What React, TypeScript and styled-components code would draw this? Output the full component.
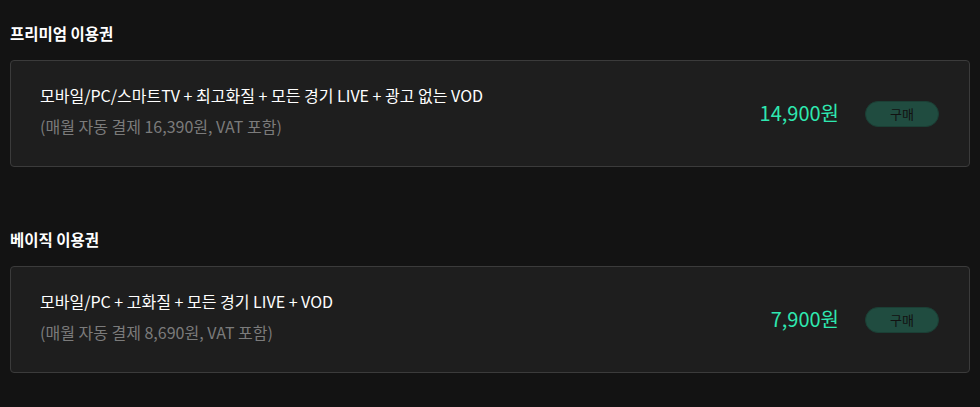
import React from 'react'
import styled, { createGlobalStyle } from 'styled-components'

type Plan = {
  title: string
  desc: string
  sub: string
  price: string
}

const plans: Plan[] = [
  {
    title: '프리미엄 이용권',
    desc: '모바일/PC/스마트TV + 최고화질 + 모든 경기 LIVE + 광고 없는 VOD',
    sub: '(매월 자동 결제 16,390원, VAT 포함)',
    price: '14,900원',
  },
  {
    title: '베이직 이용권',
    desc: '모바일/PC + 고화질 + 모든 경기 LIVE + VOD',
    sub: '(매월 자동 결제 8,690원, VAT 포함)',
    price: '7,900원',
  },
]

const App: React.FC = () => {
  return (
    <>
      <GlobalStyle />
      <Page>
        {plans.map((plan) => (
          <Section key={plan.title}>
            <SectionTitle>{plan.title}</SectionTitle>
            <Card>
              <Info>
                <Desc>{plan.desc}</Desc>
                <Sub>{plan.sub}</Sub>
              </Info>
              <Right>
                <Price>{plan.price}</Price>
                <BuyButton>구매</BuyButton>
              </Right>
            </Card>
          </Section>
        ))}
      </Page>
    </>
  )
}

const GlobalStyle = createGlobalStyle`
  body {
    margin: 0;
    background-color: #131313;
    font-family: 'Noto Sans CJK KR', 'Noto Sans', sans-serif;
  }
`

const Page = styled.div`
  display: flex;
  flex-direction: column;
  gap: 62px;
  padding: 23px 10px 0;
`

const Section = styled.section`
  display: flex;
  flex-direction: column;
  gap: 17px;
`

const SectionTitle = styled.h3`
  margin: 0;
  font-size: 15.5px;
  line-height: 20px;
  font-weight: 700;
  color: #ffffff;
`

const Card = styled.div`
  display: flex;
  align-items: center;
  justify-content: space-between;
  height: 107px;
  box-sizing: border-box;
  padding: 0 30px 0 29px;
  background-color: #1e1e1e;
  border: 1px solid #3b3b3b;
  border-radius: 4px;
`

const Info = styled.div`
  display: flex;
  flex-direction: column;
  gap: 8px;
  margin-bottom: 5px;
`

const Desc = styled.div`
  font-size: 16px;
  line-height: 23px;
  color: #ffffff;
`

const Sub = styled.div`
  font-size: 16px;
  line-height: 23px;
  color: #7b7b7b;
`

const Right = styled.div`
  display: flex;
  align-items: center;
  gap: 26px;
`

const Price = styled.div`
  font-size: 20px;
  line-height: 26px;
  color: #2ee8b0;
  margin-bottom: 2px;
`

const BuyButton = styled.button`
  width: 74px;
  height: 26px;
  border: 1px solid #1b3f35;
  border-radius: 13px;
  background-color: #204c40;
  color: #121212;
  font-family: 'Noto Sans CJK KR', 'Noto Sans', sans-serif;
  font-size: 13px;
  padding: 0;
  cursor: pointer;
`

export default App
